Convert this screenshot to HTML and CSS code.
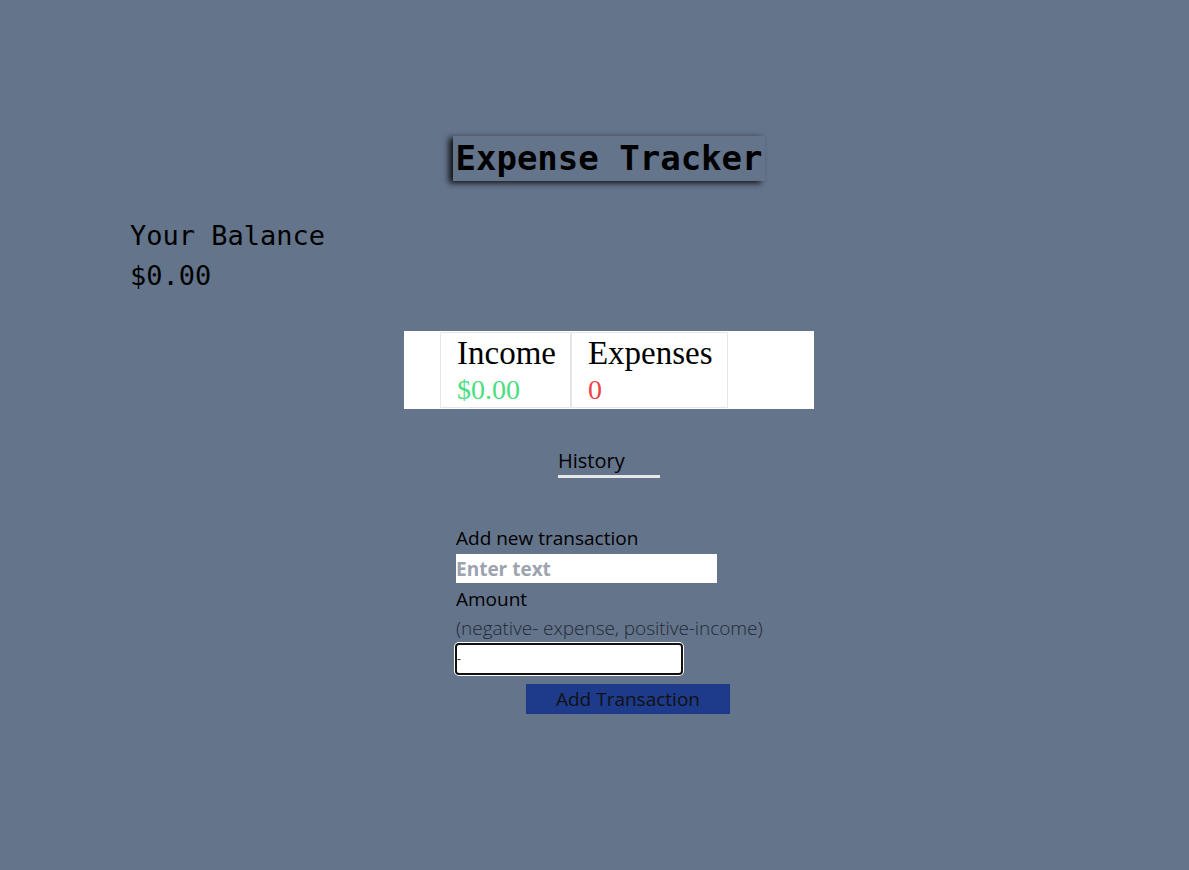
FILE: index.html
```html
<!DOCTYPE html>
<html lang="en">
<head>
<meta charset="utf-8">
<title>Expense Tracker</title>
<link rel="stylesheet" href="styles.css">
</head>
<body>
<div class="app">
  <h1 class="title">Expense Tracker</h1>
  <div class="balance">
    <div class="balance-label">Your Balance</div>
    <div class="balance-value">$0.00</div>
  </div>
  <div class="summary">
    <div class="cell">
      <div class="cell-title">Income</div>
      <div class="cell-value income">$0.00</div>
    </div>
    <div class="cell">
      <div class="cell-title">Expenses</div>
      <div class="cell-value expense">0</div>
    </div>
  </div>
  <div class="history">History</div>
  <form class="form">
    <label class="label first">Add new transaction</label>
    <input class="text-input" type="text" placeholder="Enter text">
    <label class="label">Amount</label>
    <div class="hint">(negative- expense, positive-income)</div>
    <input class="amount-input" type="text" value="-">
    <button class="submit" type="button">Add Transaction</button>
  </form>
</div>
</body>
</html>
```
FILE: styles.css
```css
html, body {
  margin: 0;
  padding: 0;
  background: #64748b;
  min-height: 100%;
}
body {
  height: 870px;
  font-family: "Open Sans", "Noto Sans", sans-serif;
  color: #000;
}
.app {
  display: flex;
  flex-direction: column;
  align-items: center;
  padding-left: 29px;
  padding-top: 136px;
}
.title {
  margin: 0;
  font-family: "DejaVu Sans Mono", monospace;
  font-weight: bold;
  font-size: 34px;
  line-height: 45px;
  height: 45px;
  padding: 0 2px;
  box-shadow: -4px 2px 6px rgba(0, 0, 0, 0.85);
  color: #000;
}
.balance {
  align-self: flex-start;
  margin-left: 101px;
  margin-top: 35px;
  font-family: "DejaVu Sans Mono", monospace;
  font-size: 27px;
  line-height: 40px;
}
.summary {
  margin-top: 35px;
  width: 410px;
  height: 78px;
  box-sizing: border-box;
  background: #fff;
  display: flex;
  padding: 1px 0 1px 36px;
}
.cell {
  border: 1px solid #e5e7eb;
  padding: 0 14px 0 16px;
  font-family: "Liberation Serif", serif;
}
.cell-title {
  font-size: 33px;
  line-height: 38px;
  margin-top: 1px;
}
.cell-value {
  font-size: 28px;
  line-height: 36px;
}
.income { color: #4ade80; }
.expense { color: #ef4444; }
.history {
  margin-top: 38px;
  width: 102px;
  font-size: 20px;
  line-height: 28px;
  border-bottom: 3px solid #e5e7eb;
}
.form {
  margin-top: 47px;
  width: 306px;
  display: flex;
  flex-direction: column;
  align-items: flex-start;
}
.label {
  font-size: 19px;
  line-height: 27px;
  margin-top: 3px;
}
.label.first {
  margin-top: 0;
  margin-bottom: 2px;
}
.text-input {
  width: 261px;
  height: 29px;
  box-sizing: border-box;
  border: none;
  padding: 0;
  margin: 0;
  background: #fff;
  font-family: "Open Sans", sans-serif;
  font-size: 19px;
  font-weight: bold;
  outline: none;
}
.text-input::placeholder {
  color: #9ca3af;
  opacity: 1;
}
.hint {
  font-size: 19px;
  font-weight: 300;
  line-height: 27px;
  margin-top: 2px;
  color: #1f2937;
  white-space: nowrap;
  letter-spacing: -0.05px;
}
.amount-input {
  margin: 1px 0 0 -1px;
  width: 228px;
  height: 32px;
  box-sizing: border-box;
  border: 2px solid #111;
  border-radius: 4px;
  box-shadow: 0 0 0 1px #fff;
  background: #fff;
  padding: 0;
  font-size: 12px;
  color: #333;
  outline: none;
}
.submit {
  margin: 9px 0 0 70px;
  width: 204px;
  height: 30px;
  border: none;
  padding: 0;
  background: #1e3a8a;
  color: #111;
  font-family: "Open Sans", sans-serif;
  font-size: 19px;
  line-height: 30px;
}
```
